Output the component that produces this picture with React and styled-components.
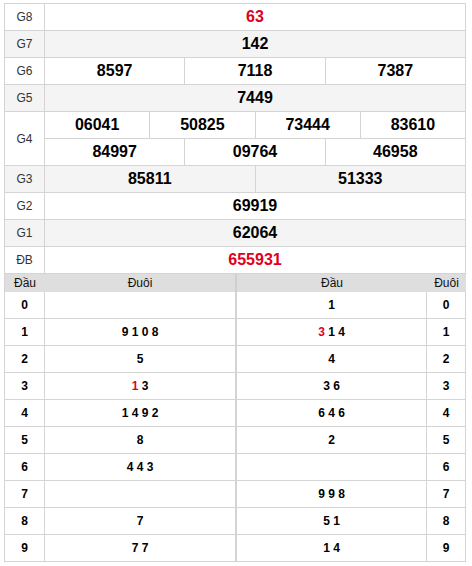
import React from 'react';
import styled, { createGlobalStyle } from 'styled-components';

const GlobalStyle = createGlobalStyle`
  html, body {
    margin: 0;
    padding: 0;
    background: #fff;
  }
  body {
    font-family: "Liberation Sans", Arial, sans-serif;
    color: #000;
  }
`;

const line = '#d4d4d4';

const Page = styled.div`
  padding: 3px 6px 0 4px;
  width: 472px;
  box-sizing: border-box;
`;

const Board = styled.div`
  width: 462px;
  border-top: 1px solid ${line};
  border-left: 1px solid ${line};
  box-sizing: border-box;
`;

const PrizeRow = styled.div`
  display: flex;
  background: ${(p) => (p.$alt ? '#f4f4f4' : '#fff')};
`;

const Label = styled.div`
  flex: 0 0 40px;
  display: flex;
  align-items: center;
  justify-content: center;
  border-right: 1px solid ${line};
  border-bottom: 1px solid ${line};
  box-sizing: border-box;
  font-size: 12px;
  color: #333;
`;

const Values = styled.div`
  flex: 1;
  display: flex;
  flex-direction: column;
`;

const Line = styled.div`
  display: flex;
`;

const Cell = styled.div`
  flex: 1 1 0;
  height: 27px;
  display: flex;
  align-items: center;
  justify-content: center;
  border-right: 1px solid ${line};
  border-bottom: 1px solid ${line};
  box-sizing: border-box;
  font-size: 16px;
  font-weight: bold;
  color: ${(p) => (p.$red ? '#e0001b' : '#000')};
`;

const Loto = styled.div`
  width: 462px;
  display: grid;
  grid-template-columns: 40px 192px 190px 39px;
  border-left: 1px solid ${line};
  box-sizing: border-box;
`;

const Head = styled.div`
  height: 18px;
  display: flex;
  align-items: center;
  justify-content: center;
  background: #dedede;
  font-size: 12px;
  color: #111;
  box-sizing: border-box;
  border-right: ${(p) => (p.$split ? `2px solid #cfcfcf` : 'none')};
`;

const Slot = styled.div`
  height: 27px;
  display: flex;
  align-items: center;
  justify-content: center;
  box-sizing: border-box;
  border-bottom: 1px solid ${line};
  border-right: ${(p) => (p.$split ? `2px solid ${line}` : `1px solid ${line}`)};
  font-size: 12px;
  font-weight: bold;
  color: #000;
  white-space: pre;
`;

const Red = styled.span`
  color: #e0001b;
`;

const prizes = [
  { label: 'G8', lines: [['63']], red: true },
  { label: 'G7', lines: [['142']] },
  { label: 'G6', lines: [['8597', '7118', '7387']] },
  { label: 'G5', lines: [['7449']] },
  { label: 'G4', lines: [['06041', '50825', '73444', '83610'], ['84997', '09764', '46958']] },
  { label: 'G3', lines: [['85811', '51333']] },
  { label: 'G2', lines: [['69919']] },
  { label: 'G1', lines: [['62064']] },
  { label: 'ĐB', lines: [['655931']], red: true },
];

// each digit list: [text, red?]
const loto = [
  { tail: [], head: [['1']] },
  { tail: [['9 1 0 8']], head: [['3', true], [' 1 4']] },
  { tail: [['5']], head: [['4']] },
  { tail: [['1', true], [' 3']], head: [['3 6']] },
  { tail: [['1 4 9 2']], head: [['6 4 6']] },
  { tail: [['8']], head: [['2']] },
  { tail: [['4 4 3']], head: [] },
  { tail: [], head: [['9 9 8']] },
  { tail: [['7']], head: [['5 1']] },
  { tail: [['7 7']], head: [['1 4']] },
];

const Digits = ({ parts }) =>
  parts.map(([t, red], i) => (red ? <Red key={i}>{t}</Red> : <React.Fragment key={i}>{t}</React.Fragment>));

const App = () => {
  return (
    <Page>
      <GlobalStyle />
      <Board>
        {prizes.map((p, i) => (
          <PrizeRow key={p.label} $alt={i % 2 === 1}>
            <Label>{p.label}</Label>
            <Values>
              {p.lines.map((ln, j) => (
                <Line key={j}>
                  {ln.map((n) => (
                    <Cell key={n} $red={p.red}>
                      {n}
                    </Cell>
                  ))}
                </Line>
              ))}
            </Values>
          </PrizeRow>
        ))}
      </Board>
      <Loto>
        <Head>Đầu</Head>
        <Head $split>Đuôi</Head>
        <Head>Đầu</Head>
        <Head>Đuôi</Head>
        {loto.map((r, i) => (
          <React.Fragment key={i}>
            <Slot>{i}</Slot>
            <Slot $split>
              <Digits parts={r.tail} />
            </Slot>
            <Slot>
              <Digits parts={r.head} />
            </Slot>
            <Slot>{i}</Slot>
          </React.Fragment>
        ))}
      </Loto>
    </Page>
  );
};

export default App;
